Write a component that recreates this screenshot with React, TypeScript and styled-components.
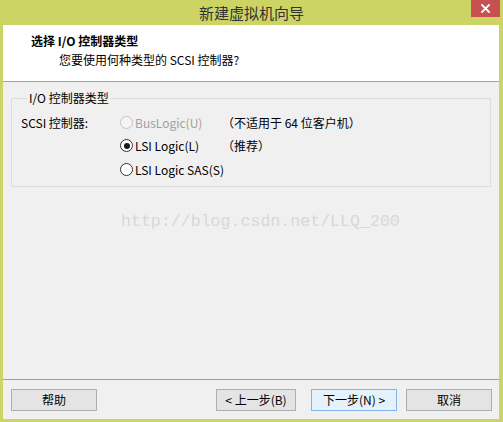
import React from "react";
import styled, { createGlobalStyle, css } from "styled-components";

const GlobalStyle = createGlobalStyle`
  html, body { margin: 0; padding: 0; }
  body {
    font-family: "Noto Sans CJK SC", "Microsoft YaHei", sans-serif;
    -webkit-font-smoothing: antialiased;
  }
`;

const Window = styled.div`
  width: 503px;
  height: 422px;
  background: #ccd564;
  display: flex;
  flex-direction: column;
  overflow: hidden;
`;

const TitleBar = styled.div`
  position: relative;
  flex: none;
  height: 25px;
  display: flex;
  align-items: center;
  justify-content: center;
  font-size: 15px;
  color: #333;
`;

const CloseButton = styled.div`
  position: absolute;
  top: 0;
  right: 3px;
  width: 29px;
  height: 17px;
  background: #c75050;
  display: flex;
  align-items: center;
  justify-content: center;
`;

const Client = styled.div`
  flex: 1;
  min-height: 0;
  margin: 0 4px 3px 3px;
  background: #f0f0f0;
  display: flex;
  flex-direction: column;
`;

const Header = styled.div`
  flex: none;
  height: 57px;
  box-sizing: border-box;
  background: #fff;
  border-bottom: 1px solid #a0a0a0;
  padding: 8px 0 0 28px;
  color: #000;
`;

const HeaderTitle = styled.div`
  font-size: 12px;
  line-height: 16px;
  font-weight: bold;
`;

const HeaderSubtitle = styled.div`
  margin-top: 3px;
  padding-left: 28px;
  font-size: 12px;
  line-height: 16px;
`;

const Body = styled.div`
  flex: 1;
  position: relative;
  padding: 8px 8px 0 8px;
`;

const GroupBox = styled.fieldset`
  margin: 0;
  padding: 4px 0 4px 9px;
  border: 1px solid #dcdcdc;
  min-width: 0;
`;

const Legend = styled.legend`
  margin-left: 6px;
  padding: 0 2px;
  font-size: 12px;
  line-height: 16px;
  color: #000;
`;

const OptionGrid = styled.div`
  display: grid;
  grid-template-columns: 99px 102px auto;
  grid-template-rows: 24px 23px 25px;
  align-items: center;
  font-size: 12px;
  color: #000;
`;

const FieldLabel = styled.div`
  white-space: nowrap;
`;

const RadioRow = styled.div<{ $disabled?: boolean }>`
  display: flex;
  align-items: center;
  white-space: nowrap;
  color: ${(p) => (p.$disabled ? "#a0a0a0" : "#000")};
`;

const RadioCircle = styled.span<{ $checked?: boolean; $disabled?: boolean }>`
  position: relative;
  width: 13px;
  height: 13px;
  box-sizing: border-box;
  border-radius: 50%;
  margin-right: 2px;
  flex: none;
  border: 1px solid ${(p) => (p.$disabled ? "#c4c4c4" : "#333")};
  background: ${(p) => (p.$disabled ? "#f4f4f4" : "#fff")};
  ${(p) =>
    p.$checked &&
    css`
      &::after {
        content: "";
        position: absolute;
        left: 2.5px;
        top: 2.5px;
        width: 6px;
        height: 6px;
        border-radius: 50%;
        background: #1a1a1a;
      }
    `}
`;

const Note = styled.div`
  white-space: nowrap;
`;

const Watermark = styled.div`
  position: absolute;
  left: 118px;
  top: 130px;
  font-family: "Liberation Mono", monospace;
  font-size: 16.6px;
  line-height: 20px;
  color: #d8d8d8;
  pointer-events: none;
  white-space: nowrap;
`;

const Footer = styled.div`
  flex: none;
  border-top: 1px solid #a0a0a0;
  padding: 9px 7px 8px 8px;
  display: flex;
  align-items: center;
  justify-content: space-between;
`;

const ButtonGroup = styled.div<{ $gap: number }>`
  display: flex;
  gap: ${(p) => p.$gap}px;
`;

const Button = styled.button<{ $primary?: boolean; $width?: number }>`
  width: ${(p) => p.$width ?? 86}px;
  height: 22px;
  box-sizing: border-box;
  padding: 0;
  margin: 0;
  font-family: inherit;
  font-size: 12px;
  line-height: 20px;
  color: #000;
  border: 1px solid ${(p) => (p.$primary ? "#7eb4ea" : "#adadad")};
  background: ${(p) => (p.$primary ? "#e5f1fb" : "#e4e4e4")};
  white-space: nowrap;
`;

export default function App() {
  return (
    <>
      <GlobalStyle />
      <Window>
        <TitleBar>
          新建虚拟机向导
          <CloseButton>
            <svg width="9" height="9" viewBox="0 0 9 9">
              <path d="M1 1L8 8M8 1L1 8" stroke="#fff" strokeWidth="1.8" strokeLinecap="square" />
            </svg>
          </CloseButton>
        </TitleBar>
        <Client>
          <Header>
            <HeaderTitle>选择 I/O 控制器类型</HeaderTitle>
            <HeaderSubtitle>您要使用何种类型的 SCSI 控制器?</HeaderSubtitle>
          </Header>
          <Body>
            <GroupBox>
              <Legend>I/O 控制器类型</Legend>
              <OptionGrid>
                <FieldLabel>SCSI 控制器:</FieldLabel>
                <RadioRow $disabled>
                  <RadioCircle $disabled />
                  BusLogic(U)
                </RadioRow>
                <Note>（不适用于 64 位客户机）</Note>
                <span />
                <RadioRow>
                  <RadioCircle $checked />
                  LSI Logic(L)
                </RadioRow>
                <Note>（推荐）</Note>
                <span />
                <RadioRow>
                  <RadioCircle />
                  LSI Logic SAS(S)
                </RadioRow>
                <span />
              </OptionGrid>
            </GroupBox>
            <Watermark>http://blog.csdn.net/LLQ_200</Watermark>
          </Body>
          <Footer>
            <Button>帮助</Button>
            <ButtonGroup $gap={9}>
              <ButtonGroup $gap={15}>
                <Button $width={80}>&lt; 上一步(B)</Button>
                <Button $primary>下一步(N) &gt;</Button>
              </ButtonGroup>
              <Button>取消</Button>
            </ButtonGroup>
          </Footer>
        </Client>
      </Window>
    </>
  );
}
